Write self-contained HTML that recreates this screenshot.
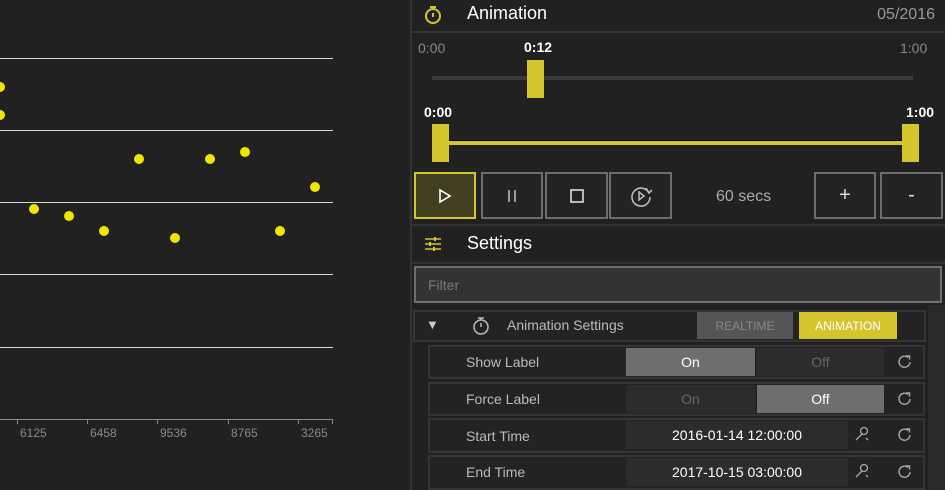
<!DOCTYPE html>
<html><head><style>
*{margin:0;padding:0;box-sizing:border-box}
body{width:945px;height:490px;background:#212121;overflow:hidden;position:relative;font-family:"Liberation Sans",sans-serif;color:#ddd}
.a{position:absolute}
.g{position:absolute;left:0;width:333px;height:1px;background:#d8d8d8}
.d{position:absolute;width:10px;height:10px;border-radius:50%;background:#f2e600}
.t{position:absolute;top:426px;font-size:12px;color:#8a8a8a}
.tk{position:absolute;top:419px;width:1px;height:5px;background:#888}
.btn{position:absolute;top:172px;height:47px;border:2px solid #6e6e6e;background:#232323;display:flex;align-items:center;justify-content:center;color:#ddd}
.row{position:absolute;left:428px;width:497px;border:2px solid #353535;background:#232323}
.lbl{position:absolute;left:36px;font-size:14px;color:#bbb}
</style></head><body>
<div class="g" style="top:58px"></div><div class="g" style="top:130px"></div><div class="g" style="top:202px"></div><div class="g" style="top:274px"></div><div class="g" style="top:347px"></div>
<div class="a" style="left:0;top:419px;width:333px;height:1px;background:#888"></div>
<div class="tk" style="left:17px"></div><div class="tk" style="left:87px"></div><div class="tk" style="left:157px"></div><div class="tk" style="left:228px"></div><div class="tk" style="left:298px"></div><div class="tk" style="left:332px"></div>
<div class="t" style="left:20px">6125</div><div class="t" style="left:90px">6458</div><div class="t" style="left:160px">9536</div><div class="t" style="left:231px">8765</div><div class="t" style="left:301px">3265</div>
<div class="d" style="left:-5px;top:82px"></div><div class="d" style="left:-5px;top:110px"></div><div class="d" style="left:29px;top:204px"></div><div class="d" style="left:64px;top:211px"></div><div class="d" style="left:99px;top:226px"></div><div class="d" style="left:134px;top:154px"></div><div class="d" style="left:170px;top:233px"></div><div class="d" style="left:205px;top:154px"></div><div class="d" style="left:240px;top:147px"></div><div class="d" style="left:275px;top:226px"></div><div class="d" style="left:310px;top:182px"></div>

<div class="a" style="left:410px;top:0;width:2px;height:490px;background:#333"></div>
<svg class="a" style="left:424px;top:5px" width="18" height="20" viewBox="0 0 18 20"><circle cx="9" cy="11" r="7" fill="none" stroke="#d4c52f" stroke-width="2"/><path d="M6 2h6M9 2v3M9 8v4" stroke="#d4c52f" stroke-width="2"/></svg>
<div class="a" style="left:467px;top:3px;font-size:18px;color:#fff">Animation</div>
<div class="a" style="right:10px;top:6px;font-size:16px;color:#999">05/2016</div>
<div class="a" style="left:412px;top:31px;width:533px;height:2px;background:#333"></div>
<div class="a" style="left:418px;top:40px;font-size:14px;color:#888">0:00</div>
<div class="a" style="left:524px;top:39px;font-size:14px;color:#fff;font-weight:bold">0:12</div>
<div class="a" style="left:900px;top:40px;font-size:14px;color:#888">1:00</div>
<div class="a" style="left:432px;top:76px;width:481px;height:4px;background:#3a3a3a"></div>
<div class="a" style="left:527px;top:60px;width:17px;height:38px;background:#d4c52f"></div>
<div class="a" style="left:424px;top:104px;font-size:14px;color:#fff;font-weight:bold">0:00</div>
<div class="a" style="left:906px;top:104px;font-size:14px;color:#fff;font-weight:bold">1:00</div>
<div class="a" style="left:440px;top:140px;width:470px;height:5px;background:#d4c52f;border-top:1px solid #000"></div>
<div class="a" style="left:432px;top:124px;width:17px;height:38px;background:#d4c52f"></div>
<div class="a" style="left:902px;top:124px;width:17px;height:38px;background:#d4c52f"></div>
<div class="btn" style="left:414px;width:62px;border-color:#d4c52f;background:#434021"><svg width="14" height="16"><path d="M2 2L12 8L2 14Z" fill="none" stroke="#fff" stroke-width="1.6"/></svg></div>
<div class="btn" style="left:481px;width:62px"><svg width="12" height="14"><path d="M3 1v12M9 1v12" stroke="#bbb" stroke-width="1.6"/></svg></div>
<div class="btn" style="left:545px;width:63px"><svg width="14" height="14"><rect x="1" y="1" width="12" height="12" fill="none" stroke="#ddd" stroke-width="1.6"/></svg></div>
<div class="btn" style="left:609px;width:63px"><svg width="24" height="24" viewBox="0 0 24 24"><path d="M20 9A9 9 0 1 0 21 13" fill="none" stroke="#bbb" stroke-width="1.6"/><path d="M17 4l3 5 3-3" fill="none" stroke="#bbb" stroke-width="1.6"/><path d="M10 8l5 4-5 4z" fill="none" stroke="#bbb" stroke-width="1.5"/></svg></div>
<div class="a" style="left:716px;top:188px;font-size:16px;color:#aaa">60 secs</div>
<div class="btn" style="left:814px;width:62px;font-size:20px">+</div>
<div class="btn" style="left:880px;width:63px;font-size:20px">-</div>
<div class="a" style="left:412px;top:224px;width:533px;height:2px;background:#333"></div>
<svg class="a" style="left:424px;top:236px" width="18" height="16"><path d="M1 3h16M1 8h16M1 13h16" stroke="#d4c52f" stroke-width="1.5"/><path d="M11 1v4M6 6v4M10 11v4" stroke="#d4c52f" stroke-width="2"/></svg>
<div class="a" style="left:467px;top:233px;font-size:18px;color:#fff">Settings</div>
<div class="a" style="left:412px;top:262px;width:533px;height:2px;background:#333"></div>
<div class="a" style="left:414px;top:266px;width:528px;height:37px;border:2px solid #6e6e6e;background:#333"></div>
<div class="a" style="left:428px;top:277px;font-size:14px;color:#777">Filter</div>
<div class="a" style="left:928px;top:305px;width:17px;height:185px;background:#2a2a2a"></div>
<div class="a" style="left:413px;top:310px;width:513px;height:32px;border:2px solid #353535;background:#232323"></div>
<div class="a" style="left:426px;top:317px;font-size:13px;color:#ccc">▼</div>
<svg class="a" style="left:472px;top:316px" width="18" height="20"><circle cx="9" cy="11" r="7" fill="none" stroke="#bbb" stroke-width="1.5"/><path d="M6 2h6M9 2v2M9 7v4" stroke="#bbb" stroke-width="1.5"/></svg>
<div class="a" style="left:507px;top:317px;font-size:14px;color:#bbb">Animation Settings</div>
<div class="a" style="left:697px;top:312px;width:96px;height:27px;background:#555;color:#888;font-size:12px;display:flex;align-items:center;justify-content:center">REALTIME</div>
<div class="a" style="left:799px;top:312px;width:98px;height:27px;background:#d4c52f;color:#fff;font-size:12px;display:flex;align-items:center;justify-content:center">ANIMATION</div>

<div class="row" style="top:345px;height:34px"><div class="lbl" style="top:7px">Show Label</div></div>
<div class="a" style="left:626px;top:348px;width:129px;height:28px;background:#6e6e6e;color:#fff;font-size:14px;display:flex;align-items:center;justify-content:center">On</div>
<div class="a" style="left:757px;top:348px;width:127px;height:28px;background:#2c2c2c;color:#666;font-size:14px;display:flex;align-items:center;justify-content:center">Off</div>
<div class="row" style="top:382px;height:34px"><div class="lbl" style="top:7px">Force Label</div></div>
<div class="a" style="left:626px;top:385px;width:129px;height:28px;background:#2c2c2c;color:#666;font-size:14px;display:flex;align-items:center;justify-content:center">On</div>
<div class="a" style="left:757px;top:385px;width:127px;height:28px;background:#6e6e6e;color:#fff;font-size:14px;display:flex;align-items:center;justify-content:center">Off</div>
<div class="row" style="top:418px;height:35px"><div class="lbl" style="top:8px">Start Time</div></div>
<div class="a" style="left:626px;top:421px;width:222px;height:28px;background:#2c2c2c;color:#fff;font-size:14px;display:flex;align-items:center;justify-content:center">2016-01-14 12:00:00</div>
<div class="row" style="top:455px;height:35px"><div class="lbl" style="top:7px">End Time</div></div>
<div class="a" style="left:626px;top:458px;width:222px;height:28px;background:#2c2c2c;color:#fff;font-size:14px;display:flex;align-items:center;justify-content:center">2017-10-15 03:00:00</div>

<svg class="a" style="left:897px;top:354px" width="16" height="16"><path d="M13 8A5.5 5.5 0 1 1 11 3.5" fill="none" stroke="#aaa" stroke-width="1.4"/><path d="M9 2h3.5v3.5" fill="none" stroke="#aaa" stroke-width="1.4"/></svg>
<svg class="a" style="left:897px;top:391px" width="16" height="16"><path d="M13 8A5.5 5.5 0 1 1 11 3.5" fill="none" stroke="#aaa" stroke-width="1.4"/><path d="M9 2h3.5v3.5" fill="none" stroke="#aaa" stroke-width="1.4"/></svg>
<svg class="a" style="left:897px;top:427px" width="16" height="16"><path d="M13 8A5.5 5.5 0 1 1 11 3.5" fill="none" stroke="#aaa" stroke-width="1.4"/><path d="M9 2h3.5v3.5" fill="none" stroke="#aaa" stroke-width="1.4"/></svg>
<svg class="a" style="left:897px;top:464px" width="16" height="16"><path d="M13 8A5.5 5.5 0 1 1 11 3.5" fill="none" stroke="#aaa" stroke-width="1.4"/><path d="M9 2h3.5v3.5" fill="none" stroke="#aaa" stroke-width="1.4"/></svg>
<svg class="a" style="left:854px;top:426px" width="16" height="16"><circle cx="10" cy="5" r="3.5" fill="none" stroke="#aaa" stroke-width="1.3"/><path d="M8 8L2 14M12 12l2 2" stroke="#aaa" stroke-width="1.3"/></svg>
<svg class="a" style="left:854px;top:463px" width="16" height="16"><circle cx="10" cy="5" r="3.5" fill="none" stroke="#aaa" stroke-width="1.3"/><path d="M8 8L2 14M12 12l2 2" stroke="#aaa" stroke-width="1.3"/></svg>
</body></html>
